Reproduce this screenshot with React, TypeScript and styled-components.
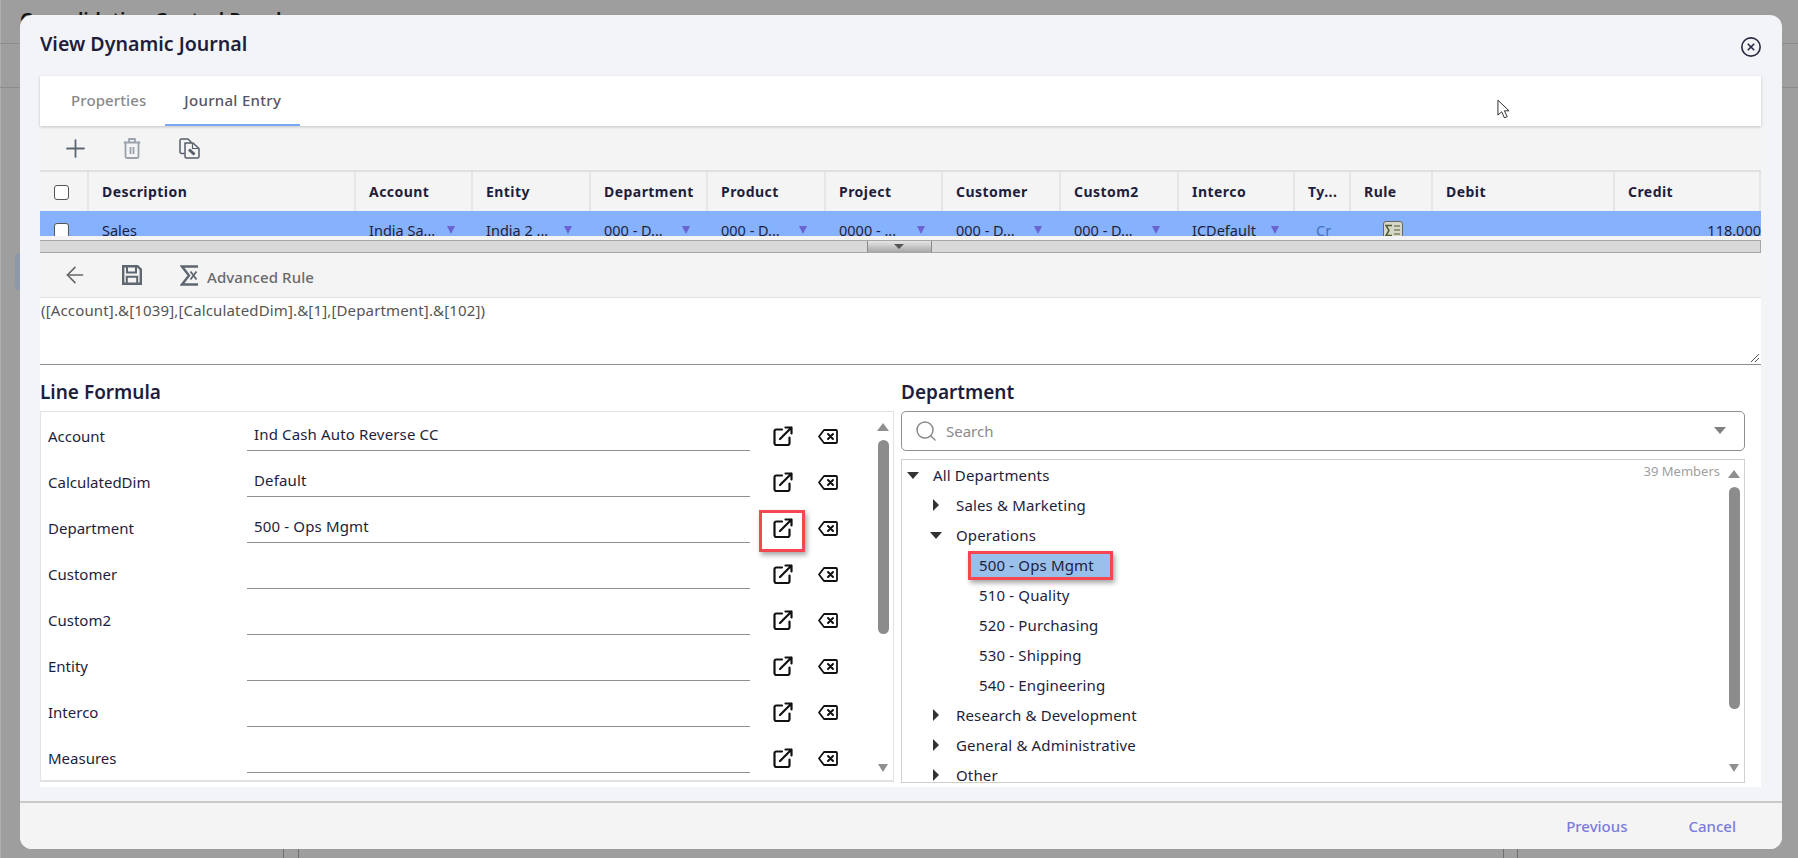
import React from 'react';
import styled, { createGlobalStyle } from 'styled-components';
import { Plus, CircleX, Search, ArrowLeft } from 'lucide-react';

const Global = createGlobalStyle`
  html, body { margin: 0; padding: 0; height: 100%; overflow: hidden; background: #9e9e9e; }
  body { font-family: "Noto Sans", "Open Sans", sans-serif; color: #1e1e3c; }
  *, *::before, *::after { box-sizing: border-box; }
`;

const Page = styled.div`
  position: relative; width: 1798px; height: 858px; overflow: hidden;
  background: #9e9e9e; box-shadow: inset 1px 0 0 #b0b0b0;
`;
const AppHeader = styled.div`
  height: 44px; padding: 6px 20px 0; border-bottom: 1px solid #8c8c8c;
  font-size: 19.3px; font-weight: 600; color: #151515; line-height: 28px;
`;
const AppSub = styled.div`height: 44px; border-bottom: 1px solid #8c8c8c;`;
const AppMarker = styled.div`
  position: absolute; left: 15px; top: 253px; width: 6px; height: 37px; background: #8f98a8; border-radius: 4px 0 0 4px;
`;
const AppColumns = styled.div`
  position: absolute; left: 283px; width: 1235px; top: 840px; bottom: 0;
  border-left: 1px solid #6e6e6e; border-right: 1px solid #6e6e6e;
  &::before { content: ""; position: absolute; left: 14px; top: 0; bottom: 0; width: 1px; background: #6e6e6e; }
  &::after { content: ""; position: absolute; right: 13px; top: 0; bottom: 0; width: 1px; background: #6e6e6e; }
`;

const Modal = styled.div`
  position: absolute; left: 20px; top: 15px; width: 1762px; height: 834px;
  background: #f3f4f8; border-radius: 12px; overflow: hidden;
  display: flex; flex-direction: column;
`;
const TitleBar = styled.div`
  height: 61px; padding: 0 20px; display: flex; align-items: center; justify-content: space-between;
`;
const Title = styled.h1`margin: 0 0 3px; font-size: 19.6px; font-weight: 600; color: #1e1e3c; line-height: 28px;`;
const CloseBtn = styled.span`display: flex; color: #2a2a44; margin-top: 2px;`;

const Body = styled.div`margin: 0 20px; flex: 0 0 auto; display: flex; flex-direction: column; width: 1721px;`;

const TabBar = styled.div`
  height: 50px; background: #fff; box-shadow: 0 1px 3px rgba(0,0,0,.2); display: flex; padding-left: 12px;
  position: relative;
`;
const Tab = styled.div<{ $active?: boolean }>`
  padding: 0 19px; display: flex; align-items: center; font-size: 15px; font-weight: 500;
  height: 50px; letter-spacing: ${p => (p.$active ? '.3px' : '.1px')};
  color: ${p => (p.$active ? '#555566' : '#8a8a8a')};
  border-bottom: 2px solid ${p => (p.$active ? '#7aa7f5' : 'transparent')};
`;
const Cursor = styled.svg`position: absolute; left: 1457px; top: 23px;`;

const Work = styled.div`background: #f4f4f5; display: flex; flex-direction: column;`;
const Toolbar = styled.div<{ $h: number }>`
  height: ${p => p.$h}px; display: flex; align-items: center; padding-left: 24px; gap: 35px;
`;
const IconSlot = styled.span<{ $c?: string }>`
  display: flex; width: 22px; height: 22px; align-items: center; justify-content: center;
  color: ${p => p.$c || '#555'};
  svg { flex: none; }
`;
const AdvGroup = styled.div`display: flex; align-items: center; gap: 7px;`;
const AdvLabel = styled.span`font-size: 15px; font-weight: 500; color: #6a6a6a; letter-spacing: .1px; padding-top: 3px;`;

const Grid = styled.div`height: 66px; overflow: hidden; border-top: 2px solid #e0e0e0;`;
const GridRow = styled.div<{ $sel?: boolean }>`
  display: grid;
  grid-template-columns: 49px 267px 117px 118px 117px 118px 117px 118px 118px 116px 56px 82px 182px 146px;
  background: ${p => (p.$sel ? '#85b1fd' : '#f4f4f5')};
  height: 39px;
`;
const HeadCell = styled.div`
  padding: 0 0 1px 13px; font-size: 14px; font-weight: 700; color: #1e1e3c; letter-spacing: .45px;
  display: flex; align-items: center; border-right: 2px solid #e6e6e6; white-space: nowrap; overflow: hidden;
`;
const CheckCell = styled.div`display: flex; justify-content: center; align-items: flex-start; padding: 12px 6px 0 0;`;
const HeadCheckCell = styled(CheckCell)`padding: 13px 4px 0 0; border-right: 2px solid #e6e6e6;`;
const Check = styled.span`
  display: block; width: 15px; height: 15px; background: #fff; border: 1px solid #555; border-radius: 3px;
`;
const RowCell = styled.div<{ $right?: boolean; $inset?: number }>`
  font-size: 14.5px; color: #1e1e3c; padding: 9px 12px 0 ${p => p.$inset ?? 13}px; line-height: 20px; white-space: nowrap;
  display: flex; gap: 8px; position: relative; overflow: hidden;
  justify-content: ${p => (p.$right ? 'flex-end' : 'flex-start')};
  ${p => p.$right && 'padding-right: 0;'}
`;
const CellText = styled.span<{ $w?: number; $c?: string }>`
  ${p => p.$w && `width: ${p.$w}px;`}
  color: ${p => p.$c || 'inherit'};
`;
const FilterTri = styled.i`
  display: block; width: 0; height: 0; margin-top: 6px;
  border-left: 4px solid transparent; border-right: 4px solid transparent; border-top: 8px solid #6a63d0;
`;

const Splitter = styled.div`
  margin-top: 4px; height: 13px; background: #d9d9d9; border: 1px solid #a6a6a6; border-width: 1px 1px 1px 0;
  display: flex; justify-content: center; padding-left: 40px;
`;
const SplitHandle = styled.div`
  width: 65px; height: 11px; margin-left: -42px;
  border-left: 1px solid #888; border-right: 1px solid #888;
  background: linear-gradient(#e6e6e6, #a8a8a8);
  display: flex; align-items: center; justify-content: center;
  &::after { content: ""; width: 0; height: 0; border-left: 5px solid transparent; border-right: 5px solid transparent; border-top: 5px solid #555; }
`;

const Formula = styled.div`
  height: 68px; background: #fff; border-bottom: 1px solid #8f8f8f; border-top: 1px solid #e2e2e2;
  padding: 0 0 0 1px; font-size: 15px; letter-spacing: .15px; color: #555; position: relative; line-height: 24px;
`;
const Grip = styled.svg`position: absolute; right: 1px; bottom: 1px;`;

const Editors = styled.div`
  background: #fff; height: 422px; display: grid; grid-template-columns: 854px 7px 844px; grid-template-rows: 46px 1fr;
`;
const SectionHead = styled.h2`
  margin: 0; font-size: 19px; font-weight: 600; color: #1e1e3c; line-height: 28px; padding: 13px 0 0;
`;
const Spacer = styled.div``;
const FormPanel = styled.div`
  height: 371px; border: 1px solid #e2e2e2; border-width: 1px 1px 2px 1px; position: relative; overflow: hidden;
  display: flex; flex-direction: column; padding: 0 0 0 7px;
`;
const FormRow = styled.div`
  display: grid; grid-template-columns: 199px 503px 66px 24px; height: 46px; flex: none; align-items: start;
`;
const FormLabel = styled.div`font-size: 15px; color: #1e1e3c; padding-top: 14px; line-height: 20px;`;
const FormField = styled.div`
  height: 39px; border-bottom: 1px solid #8f8f8f; font-size: 15px; letter-spacing: .15px; color: #1e1e3c;
  padding: 12px 0 0 7px; line-height: 20px;
`;
const RowIcon = styled.span<{ $mark?: boolean; $pad: number }>`
  display: flex; justify-content: center; padding-top: ${p => p.$pad}px; position: relative; color: #111;
  ${p => p.$mark && `
    &::after { content: ""; position: absolute; left: 9px; top: 6px; width: 46px; height: 42px;
      border: 3px solid #f5474f; box-shadow: 2px 3px 5px rgba(0,0,0,.35); }
  `}
`;
const Track = styled.div<{ $top: number; $bottom: number }>`
  position: absolute; right: 4px; top: ${p => p.$top}px; bottom: ${p => p.$bottom}px; width: 12px;
  display: flex; flex-direction: column; align-items: center; justify-content: space-between;
`;
const ArrowUp = styled.i`
  display: block; width: 0; height: 0; border-left: 6px solid transparent; border-right: 6px solid transparent;
  border-bottom: 8px solid #8f8f8f;
`;
const ArrowDown = styled.i`
  display: block; width: 0; height: 0; border-left: 5px solid transparent; border-right: 5px solid transparent;
  border-top: 8px solid #8f8f8f;
`;
const Thumb = styled.div<{ $h: number; $t: number }>`
  position: absolute; top: ${p => p.$t}px; width: 11px; height: ${p => p.$h}px; border-radius: 6px; background: #8c8c8c;
`;

const DeptColumn = styled.div`height: 372px; display: flex; flex-direction: column;`;
const SearchBox = styled.div`
  height: 40px; border: 1px solid #8f8f8f; border-radius: 5px; display: flex; align-items: center;
  padding: 0 18px 0 12px; gap: 8px; color: #8a8a8a; background: #fff; flex: none;
`;
const SearchText = styled.span`flex: 1; font-size: 15px; color: #8a8a8a;`;
const SearchCaret = styled.i`
  display: block; width: 0; height: 0; border-left: 6px solid transparent; border-right: 6px solid transparent;
  border-top: 7px solid #808080; margin-top: -2px;
`;
const TreeBox = styled.div`
  margin-top: 8px; height: 324px; border: 1px solid #cfcfcf; position: relative; overflow: hidden;
`;
const Members = styled.div`
  position: absolute; top: 1px; right: 24px; font-size: 13px; color: #a0a0a0; line-height: 20px;
`;
const TreeRow = styled.div<{ $level: number }>`
  height: 30px; display: flex; align-items: center; font-size: 15px; letter-spacing: .15px; color: #1e1e3c;
  padding-left: ${p => p.$level * 23 + 3}px; white-space: nowrap;
`;
const Caret = styled.span<{ $open?: boolean; $none?: boolean }>`
  display: block; width: 24px; margin-right: 4px; flex: none; position: relative; height: 12px;
  ${p => !p.$none && `
    &::after {
      content: ""; position: absolute; width: 0; height: 0;
      ${p.$open
        ? 'left: 2px; top: 3px; border-left: 6px solid transparent; border-right: 6px solid transparent; border-top: 7px solid #333;'
        : 'left: 5px; top: 0; border-top: 6px solid transparent; border-bottom: 6px solid transparent; border-left: 6px solid #333;'}
    }
  `}
`;
const Selected = styled.span`
  background: #98c0ea; padding: 0 8px; margin-left: -11px; height: 29px;
  display: flex; align-items: center; width: 145px;
  border: 3px solid #f5474f; box-shadow: 2px 3px 5px rgba(0,0,0,.35);
`;

const BodyGap = styled.div`flex: 1;`;
const Footer = styled.div`
  height: 48px; background: #f4f4f5; border-top: 2px solid #c9c9c9; display: flex; align-items: center;
  justify-content: flex-end; gap: 61px; padding: 0 46px 0 0; flex: none;
`;
const FootBtn = styled.span`font-size: 15px; font-weight: 500; color: #7b7bdc;`;
const RuleIcon = styled.span`
  position: absolute; left: 32px; top: 10px; width: 20px; height: 20px; background: #d5d8c8;
  border: 1px solid #666; border-radius: 3px;
  display: flex; align-items: center; justify-content: center;
`;

const ExtLink = () => (
  <svg width="20" height="20" viewBox="0 0 20 20" fill="none" stroke="currentColor" strokeWidth="2.200" strokeLinecap="round" strokeLinejoin="round">
    <path d="M9 3.500H3.200A1.700 1.700 0 0 0 1.500 5.200v12.100A1.700 1.700 0 0 0 3.200 19h11.600a1.700 1.700 0 0 0 1.700-1.700V11.500" />
    <path d="M7 13 18.500 1.500M12.500 1.500h6V7.500" />
  </svg>
);
const ClearField = () => (
  <svg width="20" height="15" viewBox="0 0 20 15" fill="none" stroke="currentColor" strokeWidth="1.800" strokeLinejoin="round" strokeLinecap="round">
    <path d="M6 1H18a1 1 0 0 1 1 1v11a1 1 0 0 1-1 1H6L1 7.500z" />
    <path d="M10 5l5 5M15 5l-5 5" strokeWidth="2" />
  </svg>
);
const TrashIcon = () => (
  <svg width="18" height="21" viewBox="0 0 18 21" fill="none" stroke="#9aa2ab" strokeWidth="1.800" strokeLinejoin="round">
    <path d="M.8 4.500h16.400M6 4.200V1h6v3.200" />
    <path d="M2.500 4.500v14a1.500 1.500 0 0 0 1.500 1.500h10a1.500 1.500 0 0 0 1.500-1.500v-14" />
    <path d="M7.500 9v7M10.500 9v7" />
  </svg>
);
const CopyEdit = () => (
  <svg width="21" height="21" viewBox="0 0 21 21" fill="none" stroke="#555e6a" strokeWidth="1.500" strokeLinejoin="round">
    <path d="M5.500 15.500H2.500A1.500 1.500 0 0 1 1 14V2.500A1.500 1.500 0 0 1 2.500 1H9l3 3v1" />
    <path d="M6 5h8l6 5.500v8a1.500 1.500 0 0 1-1.500 1.500h-11A1.500 1.500 0 0 1 6 18.500z" />
    <path d="M13.500 5.500v5h6" strokeWidth="1.200" />
    <path d="M10 11.500l5.500 5" strokeWidth="3" />
  </svg>
);
const SaveIcon = () => (
  <svg width="20" height="20" viewBox="0 0 20 20" fill="none" stroke="#5e6670" strokeWidth="2.400">
    <path d="M1.200 1.200H15.500L18.800 4.500V18.800H1.200z" />
    <path d="M5 1.500V7.500H14V1.500" strokeWidth="2" />
    <path d="M4.800 18.500V11.800H15.200V18.500" strokeWidth="2" />
  </svg>
);
const SigmaX = () => (
  <svg width="18" height="21" viewBox="0 0 18 21" fill="none" stroke="#5e6670" strokeWidth="2.400">
    <path d="M18 1.500H2L9 10.500 2 19.500H18" />
    <path d="M10.500 6.500l6 8M16.500 6.500l-6 8" strokeWidth="1.800" />
  </svg>
);

const rows = [
  ['Account', 'Ind Cash Auto Reverse CC'],
  ['CalculatedDim', 'Default'],
  ['Department', '500 - Ops Mgmt'],
  ['Customer', ''],
  ['Custom2', ''],
  ['Entity', ''],
  ['Interco', ''],
  ['Measures', ''],
];
const heads = ['Description', 'Account', 'Entity', 'Department', 'Product', 'Project', 'Customer', 'Custom2', 'Interco', 'Ty...', 'Rule', 'Debit', 'Credit'];
const dims = [
  ['India Sa...', 70], ['India 2 ...', 70], ['000 - D...', 70], ['000 - D...', 70], ['0000 - ...', 70], ['000 - D...', 70], ['000 - D...', 70], ['ICDefault', 71],
] as const;
const tree: { t: string; l: number; c?: 'o' | 'c'; s?: boolean }[] = [
  { t: 'All Departments', l: 0, c: 'o' },
  { t: 'Sales & Marketing', l: 1, c: 'c' },
  { t: 'Operations', l: 1, c: 'o' },
  { t: '500 - Ops Mgmt', l: 2, s: true },
  { t: '510 - Quality', l: 2 },
  { t: '520 - Purchasing', l: 2 },
  { t: '530 - Shipping', l: 2 },
  { t: '540 - Engineering', l: 2 },
  { t: 'Research & Development', l: 1, c: 'c' },
  { t: 'General & Administrative', l: 1, c: 'c' },
  { t: 'Other', l: 1, c: 'c' },
];

export default function App() {
  return (
    <Page>
      <Global />
      <AppHeader>Consolidation Control Panel</AppHeader>
      <AppSub />
      <AppMarker />
      <AppColumns />
      <Modal>
        <TitleBar>
          <Title>View Dynamic Journal</Title>
          <CloseBtn><CircleX size={22} strokeWidth={1.8} /></CloseBtn>
        </TitleBar>
        <Body>
          <TabBar>
            <Tab>Properties</Tab>
            <Tab $active>Journal Entry</Tab>
            <Cursor width="13" height="21" viewBox="0 0 14 22">
              <path d="M1 1v16l4-3.500 3 6.500 3-1.300-3-6.300h5z" fill="#fff" stroke="#222" strokeWidth="1" strokeLinejoin="round" />
            </Cursor>
          </TabBar>
          <Work>
            <Toolbar $h={44}>
              <IconSlot $c="#5d6670"><Plus size={29} strokeWidth={1.5} /></IconSlot>
              <IconSlot><TrashIcon /></IconSlot>
              <IconSlot><CopyEdit /></IconSlot>
            </Toolbar>
            <Grid>
              <GridRow>
                <HeadCheckCell><Check /></HeadCheckCell>
                {heads.map(h => <HeadCell key={h}>{h}</HeadCell>)}
              </GridRow>
              <GridRow $sel>
                <CheckCell><Check /></CheckCell>
                <RowCell>Sales</RowCell>
                {dims.map(([t, w], i) => (
                  <RowCell key={i}><CellText $w={w}>{t}</CellText><FilterTri /></RowCell>
                ))}
                <RowCell $inset={21}><CellText $c="#4a6fc0">Cr</CellText></RowCell>
                <RowCell>
                  <RuleIcon>
                    <svg width="16" height="15" viewBox="0 0 16 15" fill="none" stroke="#4d5a2a" strokeWidth="1.500">
                      <path d="M7 1.500H1l3 5-3 5h6" />
                      <path d="M9 2h6M9 6h6M9 10h6M11 13h4" strokeWidth="1" />
                    </svg>
                  </RuleIcon>
                </RowCell>
                <RowCell />
                <RowCell $right>118.000</RowCell>
              </GridRow>
            </Grid>
            <Splitter><SplitHandle /></Splitter>
            <Toolbar $h={44}>
              <IconSlot $c="#666"><ArrowLeft size={26} strokeWidth={1.5} /></IconSlot>
              <IconSlot><SaveIcon /></IconSlot>
              <AdvGroup>
                <IconSlot><SigmaX /></IconSlot>
                <AdvLabel>Advanced Rule</AdvLabel>
              </AdvGroup>
            </Toolbar>
          </Work>
          <Formula>
            ([Account].&amp;[1039],[CalculatedDim].&amp;[1],[Department].&amp;[102])
            <Grip width="10" height="10" viewBox="0 0 10 10" stroke="#555" strokeWidth="1">
              <path d="M1 9l8-8M5 9l4-4" />
            </Grip>
          </Formula>
          <Editors>
            <SectionHead>Line Formula</SectionHead>
            <Spacer />
            <SectionHead>Department</SectionHead>
            <FormPanel>
              {rows.map(([l, v], i) => (
                <FormRow key={l}>
                  <FormLabel>{l}</FormLabel>
                  <FormField>{v}</FormField>
                  <RowIcon $pad={14} $mark={i === 2}><ExtLink /></RowIcon>
                  <RowIcon $pad={17}><ClearField /></RowIcon>
                </FormRow>
              ))}
              <Track $top={11} $bottom={8}>
                <ArrowUp />
                <Thumb $t={17} $h={194} />
                <ArrowDown />
              </Track>
            </FormPanel>
            <Spacer />
            <DeptColumn>
              <SearchBox>
                <Search size={24} strokeWidth={1.5} />
                <SearchText>Search</SearchText>
                <SearchCaret />
              </SearchBox>
              <TreeBox>
                <Members>39 Members</Members>
                {tree.map(n => (
                  <TreeRow key={n.t} $level={n.l}>
                    <Caret $none={!n.c} $open={n.c === 'o'} />
                    {n.s ? <Selected>{n.t}</Selected> : n.t}
                  </TreeRow>
                ))}
                <Track $top={10} $bottom={10}>
                  <ArrowUp />
                  <Thumb $t={17} $h={222} />
                  <ArrowDown />
                </Track>
              </TreeBox>
            </DeptColumn>
          </Editors>
        </Body>
        <BodyGap />
        <Footer>
          <FootBtn>Previous</FootBtn>
          <FootBtn>Cancel</FootBtn>
        </Footer>
      </Modal>
    </Page>
  );
}
